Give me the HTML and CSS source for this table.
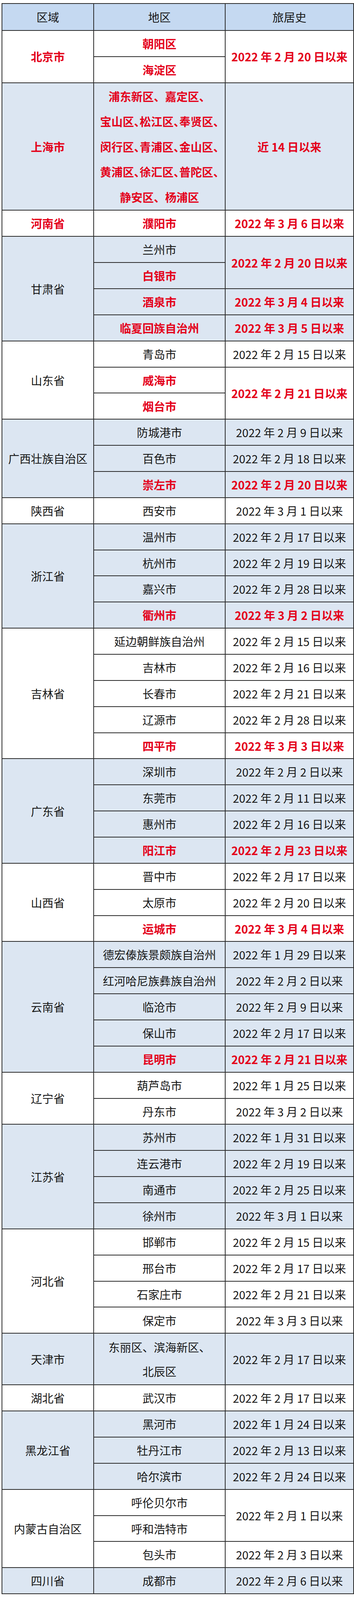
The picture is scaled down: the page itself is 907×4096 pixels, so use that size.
FILE: index.html
```html
<!DOCTYPE html>
<html lang="zh-CN">
<head>
<meta charset="utf-8">
<title>旅居史</title>
<link rel="stylesheet" href="styles.css">
</head>
<body>
<div class="page">
<table class="grid">
  <colgroup>
    <col class="c1"><col class="c2"><col class="c3">
  </colgroup>
  <thead>
    <tr class="head"><th>区域</th><th>地区</th><th>旅居史</th></tr>
  </thead>
  <tbody>
    <tr><td rowspan="2" class="r">北京市</td><td class="r">朝阳区</td><td rowspan="2" class="r">2022 年 2 月 20 日以来</td></tr>
    <tr><td class="r">海淀区</td></tr>

    <tr class="alt sh"><td class="r">上海市</td><td class="r lines">浦东新区、嘉定区、<br>宝山区<span class="pn">、</span>松江区<span class="pn">、</span>奉贤区<span class="pn">、</span><br>闵行区<span class="pn">、</span>青浦区<span class="pn">、</span>金山区<span class="pn">、</span><br>黄浦区<span class="pn">、</span>徐汇区<span class="pn">、</span>普陀区<span class="pn">、</span><br>静安区、杨浦区</td><td class="r">近 14 日以来</td></tr>

    <tr><td class="r">河南省</td><td class="r">濮阳市</td><td class="r">2022 年 3 月 6 日以来</td></tr>

    <tr class="alt"><td rowspan="4">甘肃省</td><td>兰州市</td><td rowspan="2" class="r">2022 年 2 月 20 日以来</td></tr>
    <tr class="alt"><td class="r">白银市</td></tr>
    <tr class="alt"><td class="r">酒泉市</td><td class="r">2022 年 3 月 4 日以来</td></tr>
    <tr class="alt"><td class="r">临夏回族自治州</td><td class="r">2022 年 3 月 5 日以来</td></tr>

    <tr><td rowspan="3">山东省</td><td>青岛市</td><td>2022 年 2 月 15 日以来</td></tr>
    <tr><td class="r">威海市</td><td rowspan="2" class="r">2022 年 2 月 21 日以来</td></tr>
    <tr><td class="r">烟台市</td></tr>

    <tr class="alt"><td rowspan="3">广西壮族自治区</td><td>防城港市</td><td>2022 年 2 月 9 日以来</td></tr>
    <tr class="alt"><td>百色市</td><td>2022 年 2 月 18 日以来</td></tr>
    <tr class="alt"><td class="r">崇左市</td><td class="r">2022 年 2 月 20 日以来</td></tr>

    <tr><td>陕西省</td><td>西安市</td><td>2022 年 3 月 1 日以来</td></tr>

    <tr class="alt"><td rowspan="4">浙江省</td><td>温州市</td><td>2022 年 2 月 17 日以来</td></tr>
    <tr class="alt"><td>杭州市</td><td>2022 年 2 月 19 日以来</td></tr>
    <tr class="alt"><td>嘉兴市</td><td>2022 年 2 月 28 日以来</td></tr>
    <tr class="alt"><td class="r">衢州市</td><td class="r">2022 年 3 月 2 日以来</td></tr>

    <tr><td rowspan="5">吉林省</td><td>延边朝鲜族自治州</td><td>2022 年 2 月 15 日以来</td></tr>
    <tr><td>吉林市</td><td>2022 年 2 月 16 日以来</td></tr>
    <tr><td>长春市</td><td>2022 年 2 月 21 日以来</td></tr>
    <tr><td>辽源市</td><td>2022 年 2 月 28 日以来</td></tr>
    <tr><td class="r">四平市</td><td class="r">2022 年 3 月 3 日以来</td></tr>

    <tr class="alt"><td rowspan="4">广东省</td><td>深圳市</td><td>2022 年 2 月 2 日以来</td></tr>
    <tr class="alt"><td>东莞市</td><td>2022 年 2 月 11 日以来</td></tr>
    <tr class="alt"><td>惠州市</td><td>2022 年 2 月 16 日以来</td></tr>
    <tr class="alt"><td class="r">阳江市</td><td class="r">2022 年 2 月 23 日以来</td></tr>

    <tr><td rowspan="3">山西省</td><td>晋中市</td><td>2022 年 2 月 17 日以来</td></tr>
    <tr><td>太原市</td><td>2022 年 2 月 20 日以来</td></tr>
    <tr><td class="r">运城市</td><td class="r">2022 年 3 月 4 日以来</td></tr>

    <tr class="alt"><td rowspan="5">云南省</td><td>德宏傣族景颇族自治州</td><td>2022 年 1 月 29 日以来</td></tr>
    <tr class="alt"><td>红河哈尼族彝族自治州</td><td>2022 年 2 月 2 日以来</td></tr>
    <tr class="alt"><td>临沧市</td><td>2022 年 2 月 9 日以来</td></tr>
    <tr class="alt"><td>保山市</td><td>2022 年 2 月 17 日以来</td></tr>
    <tr class="alt"><td class="r">昆明市</td><td class="r">2022 年 2 月 21 日以来</td></tr>

    <tr><td rowspan="2">辽宁省</td><td>葫芦岛市</td><td>2022 年 1 月 25 日以来</td></tr>
    <tr><td>丹东市</td><td>2022 年 3 月 2 日以来</td></tr>

    <tr class="alt"><td rowspan="4">江苏省</td><td>苏州市</td><td>2022 年 1 月 31 日以来</td></tr>
    <tr class="alt"><td>连云港市</td><td>2022 年 2 月 19 日以来</td></tr>
    <tr class="alt"><td>南通市</td><td>2022 年 2 月 25 日以来</td></tr>
    <tr class="alt"><td>徐州市</td><td>2022 年 3 月 1 日以来</td></tr>

    <tr><td rowspan="4">河北省</td><td>邯郸市</td><td>2022 年 2 月 15 日以来</td></tr>
    <tr><td>邢台市</td><td>2022 年 2 月 17 日以来</td></tr>
    <tr><td>石家庄市</td><td>2022 年 2 月 21 日以来</td></tr>
    <tr><td>保定市</td><td>2022 年 3 月 3 日以来</td></tr>

    <tr class="alt tj"><td>天津市</td><td class="lines2">东丽区、滨海新区、<br>北辰区</td><td>2022 年 2 月 17 日以来</td></tr>

    <tr><td>湖北省</td><td>武汉市</td><td>2022 年 2 月 17 日以来</td></tr>

    <tr class="alt"><td rowspan="3">黑龙江省</td><td>黑河市</td><td>2022 年 1 月 24 日以来</td></tr>
    <tr class="alt"><td>牡丹江市</td><td>2022 年 2 月 13 日以来</td></tr>
    <tr class="alt"><td>哈尔滨市</td><td>2022 年 2 月 24 日以来</td></tr>

    <tr><td rowspan="3">内蒙古自治区</td><td>呼伦贝尔市</td><td rowspan="2">2022 年 2 月 1 日以来</td></tr>
    <tr><td>呼和浩特市</td></tr>
    <tr><td>包头市</td><td>2022 年 2 月 3 日以来</td></tr>

    <tr class="alt"><td>四川省</td><td>成都市</td><td>2022 年 2 月 6 日以来</td></tr>
  </tbody>
</table>
</div>
</body>
</html>
```

FILE: styles.css
```css
html, body {
  margin: 0;
  padding: 0;
  background: #ffffff;
}

.page {
  padding: 8px 0 0 4px;
  font-family: "Noto Sans CJK SC", "Noto Sans", sans-serif;
  color: #161616;
}

.grid {
  border-collapse: collapse;
  table-layout: fixed;
  width: 901px;
  font-size: 29px;
}

.c1 { width: 235px; }
.c2 { width: 337px; }
.c3 { width: 329px; }

.grid th,
.grid td {
  border: 2px solid #2b2b2b;
  padding: 0;
  text-align: center;
  vertical-align: middle;
  white-space: nowrap;
  font-weight: 400;
  line-height: 1.2;
}

.grid tr {
  height: 66.86px;
}

.head th {
  background: #c5d9f1;
  height: 66.86px;
}

.alt td {
  background: #dce6f2;
}

.r {
  color: #e4001b;
  font-weight: 700 !important;
}

.sh {
  height: 326.8px !important;
}

.lines {
  line-height: 64.5px !important;
}

.pn {
  letter-spacing: -0.5em;
}

.tj {
  height: 131.9px !important;
}

.lines2 {
  line-height: 62px !important;
}
```
